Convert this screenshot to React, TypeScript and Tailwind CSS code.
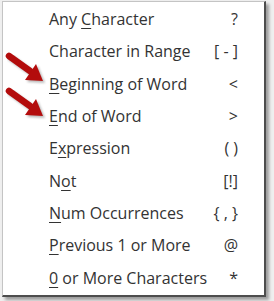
import React from 'react';

type Item = { pre: string; key: string; post: string; shortcut: string };

const items: Item[] = [
  { pre: 'Any ', key: 'C', post: 'haracter', shortcut: '?' },
  { pre: 'Character in Range', key: '', post: '', shortcut: '[ - ]' },
  { pre: '', key: 'B', post: 'eginning of Word', shortcut: '<' },
  { pre: '', key: 'E', post: 'nd of Word', shortcut: '>' },
  { pre: 'E', key: 'x', post: 'pression', shortcut: '( )' },
  { pre: 'N', key: 'o', post: 't', shortcut: '[!]' },
  { pre: '', key: 'N', post: 'um Occurrences', shortcut: '{ , }' },
  { pre: '', key: 'P', post: 'revious 1 or More', shortcut: '@' },
  { pre: '', key: '0', post: ' or More Characters', shortcut: '*' },
];

// red annotation arrow pointing down-right at the menu item
const Arrow = ({ dy }: { dy: number }) => (
  <g transform={`translate(0 ${dy})`}>
    <g transform="translate(2 2)" opacity="0.4" filter="url(#blur)">
      <line x1="9" y1="56" x2="30" y2="71" stroke="#555" strokeWidth="6.5" strokeLinecap="round" />
      <polygon points="43,81 25,80 36,64" fill="#555" />
    </g>
    <line x1="9" y1="56" x2="30" y2="71" stroke="#b30c0c" strokeWidth="6.5" strokeLinecap="round" />
    <polygon points="43,81 25,80 36,64" fill="#b30c0c" />
  </g>
);

const App = () => {
  return (
    <div className="relative w-[274px] h-[301px] bg-[#efefef] pt-[1px] pl-[2px] font-['Open_Sans',sans-serif]">
      <div className="w-[264px] h-[296px] bg-white border-l border-t border-[#c4c4c4] border-r-2 border-b-2 border-r-[#4d4d4d] border-b-[#4d4d4d] shadow-[3px_3px_3px_rgba(0,0,0,0.35)] pt-[1px] pl-[46px] pr-[26px]">
        {items.map((item) => (
          <div
            key={item.pre + item.key + item.post}
            className="h-[32.3px] flex items-center justify-between text-[16px] text-[#333]"
          >
            <span>
              {item.pre}
              {item.key && <span className="underline underline-offset-[3px]">{item.key}</span>}
              {item.post}
            </span>
            <span>{item.shortcut}</span>
          </div>
        ))}
      </div>
      <svg className="absolute left-0 top-0" width="60" height="130" viewBox="0 0 60 130">
        <defs>
          <filter id="blur">
            <feGaussianBlur stdDeviation="1" />
          </filter>
        </defs>
        <Arrow dy={0} />
        <Arrow dy={35} />
      </svg>
    </div>
  );
};

export default App;
